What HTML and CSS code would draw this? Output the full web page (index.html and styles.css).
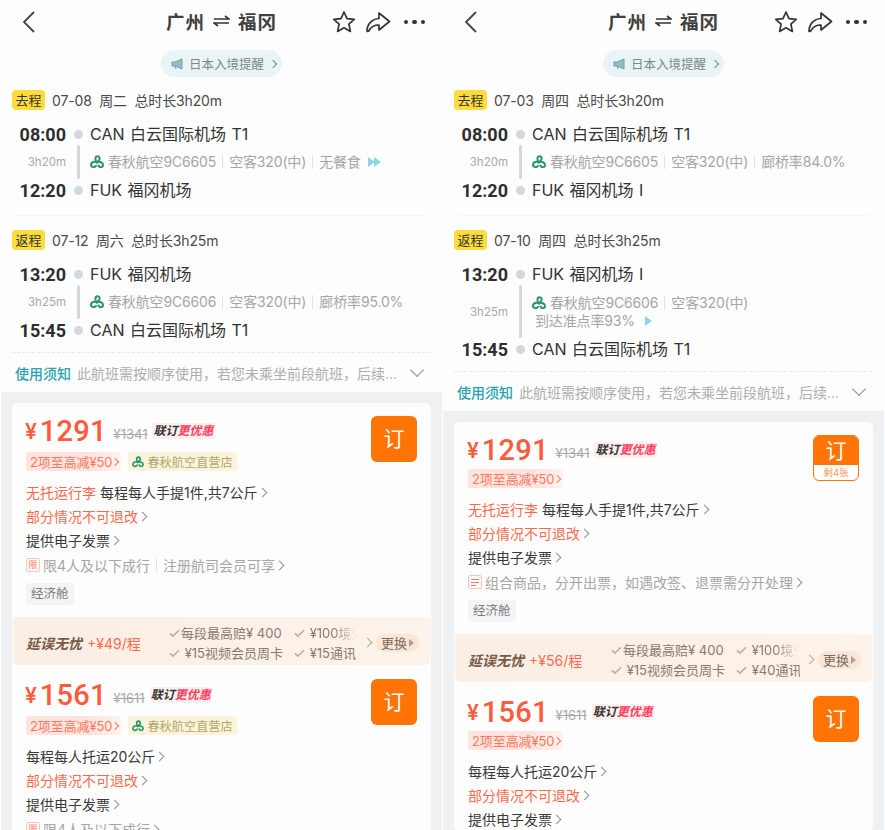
FILE: index.html
```html
<!DOCTYPE html>
<html lang="zh-CN">
<head>
    <meta charset="UTF-8">
    <meta name="viewport" content="width=device-width, initial-scale=1.0">
    <title>广州 福冈</title>
    <link rel="stylesheet" href="styles.css">
</head>
<body>
    <svg class="defs" width="0" height="0" aria-hidden="true">
        <symbol id="logo" viewBox="0 0 14 14">
            <g fill="none" stroke="currentColor" stroke-width="2" stroke-linecap="round">
                <path d="M7 7.5 C4.8 5.5 4.8 1.2 7.5 1.2 C10 1.2 10.5 4.5 8.2 5.8"/>
                <path d="M7 7.5 C5 6 1 7 1 9.8 C1 12.3 4.3 13 6 10.8"/>
                <path d="M7 7.2 C9.5 6.2 13 7.4 13 10 C13 12.5 9.6 13 8.4 10.5"/>
            </g>
        </symbol>
        <symbol id="check" viewBox="0 0 12 10">
            <path d="M1 5.5 L4.2 8.4 L11 2" fill="none" stroke="currentColor" stroke-width="1.8"/>
        </symbol>
    </svg>

    <main class="screens">
        <!-- 左边的行程 -->
        <section class="phone">
            <header class="nav">
                <svg class="back" width="14" height="24" viewBox="0 0 14 24"><path d="M12 2 L2 12 L12 22" fill="none" stroke="#444" stroke-width="1.8"/></svg>
                <h1 class="title">广州<svg width="17" height="12" viewBox="0 0 17 12"><path d="M1 4 H16 L12 1 M16 8 H1 L5 11" fill="none" stroke="#333" stroke-width="1.6"/></svg>福冈</h1>
                <div class="nav-icons">
                    <svg width="24" height="24" viewBox="0 0 24 24"><path d="M12 2 L15 8.6 L22.2 9.4 L16.9 14.2 L18.4 21.4 L12 17.8 L5.6 21.4 L7.1 14.2 L1.8 9.4 L9 8.6 Z" fill="none" stroke="#333" stroke-width="1.7" stroke-linejoin="round"/></svg>
                    <svg width="26" height="24" viewBox="0 0 26 24"><path d="M2 21 C2 14 7 9 14 8.5 V3 L24.5 11.5 L14 20 V15 C9 15 6 17 4 20.5 C3.4 21.6 2 21.8 2 21 Z" fill="none" stroke="#333" stroke-width="1.7" stroke-linejoin="round"/></svg>
                    <span class="dots"><i></i><i></i><i></i></span>
                </div>
            </header>
            <div class="notice-pill">
                <svg width="13" height="12" viewBox="0 0 13 12"><path d="M1 4 H4 L11 1 V11 L4 8 H1 Z M4 8 L5 11" fill="#8fc0c8" stroke="#7f9aa2" stroke-width="1"/></svg>
                日本入境提醒<span class="chev small"></span>
            </div>

            <div class="segment">
                <div class="seg-head"><span class="seg-tag">去程</span>07-08&nbsp; 周二&nbsp; 总时长3h20m</div>
                <div class="row"><b class="time">08:00</b><span class="dot"></span><span class="airport">CAN 白云国际机场 T1</span></div>
                <div class="row mid">
                    <span class="dur">3h20m</span><span class="bar"></span>
                    <div class="info"><svg class="logo"><use href="#logo"/></svg>春秋航空9C6605<i class="sep"></i>空客320(中)<i class="sep"></i>无餐食<span class="more"><i></i><i></i></span></div>
                </div>
                <div class="row"><b class="time">12:20</b><span class="dot"></span><span class="airport">FUK 福冈机场</span></div>
            </div>
            <div class="seg-line"></div>
            <div class="segment">
                <div class="seg-head"><span class="seg-tag">返程</span>07-12&nbsp; 周六&nbsp; 总时长3h25m</div>
                <div class="row"><b class="time">13:20</b><span class="dot"></span><span class="airport">FUK 福冈机场</span></div>
                <div class="row mid">
                    <span class="dur">3h25m</span><span class="bar"></span>
                    <div class="info"><svg class="logo"><use href="#logo"/></svg>春秋航空9C6606<i class="sep"></i>空客320(中)<i class="sep"></i>廊桥率95.0%</div>
                </div>
                <div class="row"><b class="time">15:45</b><span class="dot"></span><span class="airport">CAN 白云国际机场 T1</span></div>
            </div>
            <div class="rules"><b>使用须知</b><span>此航班需按顺序使用，若您未乘坐前段航班，后续…</span><span class="chev down"></span></div>

            <div class="list">
                <div class="card">
                    <div class="product">
                        <div class="product-main">
                            <div class="price-row"><span class="yen">¥</span><span class="price">1291</span><s class="old">¥1341</s><span class="promo">联订<em>更优惠</em></span></div>
                            <div class="chips"><span class="chip red">2项至高减¥50<span class="chev small"></span></span><span class="chip gold"><svg class="logo"><use href="#logo"/></svg>春秋航空直营店</span></div>
                            <div class="line"><span class="warn">无托运行李</span>&nbsp;每程每人手提1件,共7公斤<span class="chev"></span></div>
                            <div class="line warn">部分情况不可退改<span class="chev"></span></div>
                            <div class="line">提供电子发票<span class="chev"></span></div>
                            <div class="line muted"><span class="mark">限</span>限4人及以下成行<i class="sep"></i>注册航司会员可享<span class="chev"></span></div>
                            <span class="cabin">经济舱</span>
                        </div>
                        <div class="book">订</div>
                    </div>
                    <div class="addon">
                        <div class="addon-name"><b>延误无忧</b><span>+¥49/程</span></div>
                        <div class="perks">
                            <span><svg class="check"><use href="#check"/></svg>每段最高赔¥ 400</span><span><svg class="check"><use href="#check"/></svg>&nbsp;¥100境外</span>
                            <span><svg class="check"><use href="#check"/></svg>&nbsp;¥15视频会员周卡</span><span><svg class="check"><use href="#check"/></svg>&nbsp;¥15通讯</span>
                        </div>
                        <span class="chev"></span>
                        <span class="swap">更换<i></i></span>
                    </div>
                    <div class="product">
                        <div class="product-main">
                            <div class="price-row"><span class="yen">¥</span><span class="price">1561</span><s class="old">¥1611</s><span class="promo">联订<em>更优惠</em></span></div>
                            <div class="chips"><span class="chip red">2项至高减¥50<span class="chev small"></span></span><span class="chip gold"><svg class="logo"><use href="#logo"/></svg>春秋航空直营店</span></div>
                            <div class="line">每程每人托运20公斤<span class="chev"></span></div>
                            <div class="line warn">部分情况不可退改<span class="chev"></span></div>
                            <div class="line">提供电子发票<span class="chev"></span></div>
                            <div class="line muted"><span class="mark">限</span>限4人及以下成行<span class="chev"></span></div>
                        </div>
                        <div class="book">订</div>
                    </div>
                </div>
            </div>
        </section>

        <!-- 右边的行程 -->
        <section class="phone">
            <header class="nav">
                <svg class="back" width="14" height="24" viewBox="0 0 14 24"><path d="M12 2 L2 12 L12 22" fill="none" stroke="#444" stroke-width="1.8"/></svg>
                <h1 class="title">广州<svg width="17" height="12" viewBox="0 0 17 12"><path d="M1 4 H16 L12 1 M16 8 H1 L5 11" fill="none" stroke="#333" stroke-width="1.6"/></svg>福冈</h1>
                <div class="nav-icons">
                    <svg width="24" height="24" viewBox="0 0 24 24"><path d="M12 2 L15 8.6 L22.2 9.4 L16.9 14.2 L18.4 21.4 L12 17.8 L5.6 21.4 L7.1 14.2 L1.8 9.4 L9 8.6 Z" fill="none" stroke="#333" stroke-width="1.7" stroke-linejoin="round"/></svg>
                    <svg width="26" height="24" viewBox="0 0 26 24"><path d="M2 21 C2 14 7 9 14 8.5 V3 L24.5 11.5 L14 20 V15 C9 15 6 17 4 20.5 C3.4 21.6 2 21.8 2 21 Z" fill="none" stroke="#333" stroke-width="1.7" stroke-linejoin="round"/></svg>
                    <span class="dots"><i></i><i></i><i></i></span>
                </div>
            </header>
            <div class="notice-pill">
                <svg width="13" height="12" viewBox="0 0 13 12"><path d="M1 4 H4 L11 1 V11 L4 8 H1 Z M4 8 L5 11" fill="#8fc0c8" stroke="#7f9aa2" stroke-width="1"/></svg>
                日本入境提醒<span class="chev small"></span>
            </div>

            <div class="segment">
                <div class="seg-head"><span class="seg-tag">去程</span>07-03&nbsp; 周四&nbsp; 总时长3h20m</div>
                <div class="row"><b class="time">08:00</b><span class="dot"></span><span class="airport">CAN 白云国际机场 T1</span></div>
                <div class="row mid">
                    <span class="dur">3h20m</span><span class="bar"></span>
                    <div class="info"><svg class="logo"><use href="#logo"/></svg>春秋航空9C6605<i class="sep"></i>空客320(中)<i class="sep"></i>廊桥率84.0%</div>
                </div>
                <div class="row"><b class="time">12:20</b><span class="dot"></span><span class="airport">FUK 福冈机场 I</span></div>
            </div>
            <div class="seg-line"></div>
            <div class="segment">
                <div class="seg-head"><span class="seg-tag">返程</span>07-10&nbsp; 周四&nbsp; 总时长3h25m</div>
                <div class="row"><b class="time">13:20</b><span class="dot"></span><span class="airport">FUK 福冈机场 I</span></div>
                <div class="row mid tall">
                    <span class="dur">3h25m</span><span class="bar"></span>
                    <div class="info-stack">
                        <div class="info"><svg class="logo"><use href="#logo"/></svg>春秋航空9C6606<i class="sep"></i>空客320(中)</div>
                        <div class="info second">到达准点率93%<span class="more single"><i></i></span></div>
                    </div>
                </div>
                <div class="row"><b class="time">15:45</b><span class="dot"></span><span class="airport">CAN 白云国际机场 T1</span></div>
            </div>
            <div class="rules"><b>使用须知</b><span>此航班需按顺序使用，若您未乘坐前段航班，后续…</span><span class="chev down"></span></div>

            <div class="list">
                <div class="card">
                    <div class="product">
                        <div class="product-main">
                            <div class="price-row"><span class="yen">¥</span><span class="price">1291</span><s class="old">¥1341</s><span class="promo">联订<em>更优惠</em></span></div>
                            <div class="chips tight"><span class="chip red">2项至高减¥50<span class="chev small"></span></span></div>
                            <div class="line"><span class="warn">无托运行李</span>&nbsp;每程每人手提1件,共7公斤<span class="chev"></span></div>
                            <div class="line warn">部分情况不可退改<span class="chev"></span></div>
                            <div class="line">提供电子发票<span class="chev"></span></div>
                            <div class="line muted"><span class="mark list-mark"><i></i><i></i><i></i></span>组合商品，分开出票，如遇改签、退票需分开处理<span class="chev"></span></div>
                            <span class="cabin">经济舱</span>
                        </div>
                        <div class="book with-left"><span>订</span><small>剩4张</small></div>
                    </div>
                    <div class="addon">
                        <div class="addon-name"><b>延误无忧</b><span>+¥56/程</span></div>
                        <div class="perks">
                            <span><svg class="check"><use href="#check"/></svg>每段最高赔¥ 400</span><span><svg class="check"><use href="#check"/></svg>&nbsp;¥100境外</span>
                            <span><svg class="check"><use href="#check"/></svg>&nbsp;¥15视频会员周卡</span><span><svg class="check"><use href="#check"/></svg>&nbsp;¥40通讯</span>
                        </div>
                        <span class="chev"></span>
                        <span class="swap">更换<i></i></span>
                    </div>
                    <div class="product">
                        <div class="product-main">
                            <div class="price-row"><span class="yen">¥</span><span class="price">1561</span><s class="old">¥1611</s><span class="promo">联订<em>更优惠</em></span></div>
                            <div class="chips tight"><span class="chip red">2项至高减¥50<span class="chev small"></span></span></div>
                            <div class="line">每程每人托运20公斤<span class="chev"></span></div>
                            <div class="line warn">部分情况不可退改<span class="chev"></span></div>
                            <div class="line">提供电子发票<span class="chev"></span></div>
                        </div>
                        <div class="book">订</div>
                    </div>
                </div>
            </div>
        </section>
    </main>
</body>
</html>
```

FILE: styles.css
```css
* {
    box-sizing: border-box;
}
body {
    margin: 0;
    background: #fff;
    font-family: Inter, "Noto Sans CJK SC", sans-serif;
    color: #333;
}
.defs {
    position: absolute;
}
.screens {
    display: grid;
    grid-template-columns: 441px 441px;
    gap: 1px;
    padding-left: 1px;
    height: 830px;
    overflow: hidden;
}
.phone {
    background: #fdfdfd;
    height: 830px;
    overflow: hidden;
}

/* шапка */
.nav {
    display: grid;
    grid-template-columns: 1fr auto 1fr;
    align-items: center;
    height: 44px;
    padding: 0 17px;
}
.back {
    margin-left: 4px;
}
.title {
    display: flex;
    align-items: center;
    gap: 8px;
    margin: -2px 0 0;
    font-size: 18.5px;
    font-weight: 600;
    letter-spacing: 1px;
    color: #404040;
}
.nav-icons {
    display: flex;
    align-items: center;
    justify-content: flex-end;
    gap: 9px;
}
.dots {
    display: flex;
    gap: 4px;
    margin-left: 4px;
}
.dots i {
    width: 4.5px;
    height: 4.5px;
    border-radius: 50%;
    background: #333;
}
.notice-pill {
    display: flex;
    align-items: center;
    gap: 5px;
    width: 121px;
    height: 27px;
    margin: 6px auto 13px;
    padding-left: 10px;
    border-radius: 14px;
    background: #e9f4f6;
    font-size: 12.5px;
    color: #7a888c;
    white-space: nowrap;
}

/* сегменты */
.segment {
    padding-left: 11px;
}
.seg-head {
    display: flex;
    align-items: center;
    height: 20px;
    margin-bottom: 13px;
    font-size: 14px;
    letter-spacing: -0.15px;
    color: #4a4a4a;
}
.seg-tag {
    width: 33px;
    height: 20px;
    margin-right: 7px;
    border-radius: 4px;
    background: #ffdc3c;
    font-size: 13px;
    letter-spacing: 0;
    line-height: 20px;
    text-align: center;
    color: #333;
}
.seg-line {
    height: 1px;
    margin: 14px 14px 14px 15px;
    background: #f6f6f6;
}
.row {
    display: flex;
    align-items: center;
    height: 22px;
}
.time {
    width: 54px;
    font-family: Roboto, sans-serif;
    font-size: 18px;
    font-weight: 700;
    text-align: right;
    color: #2e2e2e;
}
.dot {
    width: 9px;
    height: 9px;
    margin: 0 7.5px;
    border-radius: 50%;
    background: #d6d7dc;
}
.airport {
    margin-top: -2px;
    font-size: 16px;
    word-spacing: 1px;
    color: #333;
}
.row.mid {
    height: 34px;
}
.row.mid.tall {
    height: 53px;
}
.dur {
    width: 54px;
    font-size: 11.5px;
    text-align: right;
    color: #a9a9a9;
}
.bar {
    align-self: stretch;
    width: 3px;
    margin: 0 10.5px;
    border-radius: 2px;
    background: #d6d7dc;
}
.info {
    display: flex;
    align-items: center;
    font-size: 14px;
    letter-spacing: -0.15px;
    line-height: 18px;
    color: #a6a6a6;
    white-space: nowrap;
}
.info.second {
    margin-left: 3px;
}
.logo {
    flex: none;
    width: 14px;
    height: 14px;
    margin-right: 4px;
    color: #2a9565;
}
.sep {
    display: inline-block;
    width: 1px;
    height: 14px;
    margin: 0 6px;
    background: #e3e3e3;
}
.more {
    display: inline-flex;
    margin-left: 7px;
}
.more.single {
    margin-left: 10px;
}
.more i {
    width: 0;
    height: 0;
    margin-right: -1px;
    border-left: 7px solid #8fd6dc;
    border-top: 5px solid transparent;
    border-bottom: 5px solid transparent;
}
.rules {
    display: flex;
    align-items: center;
    height: 40px;
    margin: 11px 12px 0 11px;
    padding: 0 6px 0 3px;
    border-top: 1px dashed #e8e8e8;
    font-size: 14px;
    color: #adadad;
    white-space: nowrap;
}
.rules b {
    margin-right: 6px;
    font-weight: 500;
    color: #2aa3ae;
}
.rules .chev {
    margin-left: auto;
}

/* карточки */
.list {
    height: 100%;
    padding: 11px 11px 0;
    background: #eff0f2;
}
.card {
    border-radius: 5px;
    background: #fdfdfd;
}
.product {
    display: flex;
    justify-content: space-between;
    align-items: flex-start;
    padding: 13px 14px 0;
}
.addon + .product {
    padding-top: 14px;
}
.addon + .product .price-row {
    margin-top: 1px;
}
.price-row {
    display: flex;
    align-items: center;
    height: 30px;
}
.yen {
    margin: 0 3px 0 -1px;
    font-size: 21px;
    font-weight: 600;
    color: #ff5a3c;
}
.price {
    font-family: Roboto, sans-serif;
    font-size: 29px;
    font-weight: 500;
    letter-spacing: 0.2px;
    color: #ff5a3c;
}
.old {
    margin: 6px 5px 0 7px;
    font-size: 13px;
    color: #a8a8a8;
}
.promo {
    padding: 0 1px;
    border-radius: 2px;
    background: #fff0f0;
    font-size: 12px;
    font-style: italic;
    font-weight: 700;
    line-height: 16px;
    color: #333;
}
.promo em {
    color: #ff4060;
}
.chips {
    display: flex;
    gap: 7px;
    margin: 6px 0 9px;
}
.chips.tight {
    margin: 4px 0 9px;
}
.chip {
    display: flex;
    align-items: center;
    height: 19px;
    padding: 0 4px;
    border-radius: 2px;
    font-size: 13px;
    white-space: nowrap;
}
.chip.red {
    padding-right: 3px;
    background: linear-gradient(90deg, #ffe3df 70%, #fff3f0);
    letter-spacing: -0.1px;
    color: #ff7a5c;
}
.chip.red .chev {
    margin-left: 0;
}
.chip.gold {
    background: #fbf4dc;
    font-size: 12.2px;
    color: #b8a468;
}
.chip .logo {
    width: 12px;
    height: 12px;
    margin-right: 3px;
}
.line {
    display: flex;
    align-items: center;
    height: 24px;
    font-size: 14px;
    color: #3a3a3a;
    white-space: nowrap;
}
.warn {
    color: #ff6a4c;
}
.muted {
    height: 26px;
    color: #a6a6a6;
}
.mark {
    flex: none;
    width: 14px;
    height: 14px;
    margin-right: 3px;
    border: 1px solid #ffc4b8;
    border-radius: 2px;
    font-size: 9px;
    line-height: 12px;
    text-align: center;
    color: #ff7a5c;
}
.list-mark {
    display: flex;
    flex-direction: column;
    justify-content: center;
    gap: 2px;
    padding-left: 2px;
}
.list-mark i {
    width: 8px;
    height: 1px;
    background: #ff7a5c;
}
.list-mark i:last-child {
    width: 5px;
}
.cabin {
    display: inline-block;
    height: 22px;
    margin-top: 5px;
    padding: 0 5px;
    border-radius: 3px;
    background: #f3f4f6;
    font-size: 12.5px;
    line-height: 22px;
    color: #7a7a7a;
}
.book {
    flex: none;
    width: 46px;
    height: 46px;
    border-radius: 6px;
    background: #ff7405;
    font-size: 21px;
    line-height: 46px;
    text-align: center;
    color: #fff;
}
.book.with-left {
    display: flex;
    flex-direction: column;
    border: 1px solid #ff7405;
    background: #fff;
    line-height: 1;
    overflow: hidden;
}
.book.with-left span {
    height: 29px;
    background: #ff7405;
    line-height: 29px;
}
.book.with-left small {
    font-size: 9.5px;
    line-height: 15px;
    color: #ff9550;
}

/* доп. услуга */
.addon {
    display: flex;
    align-items: center;
    height: 48px;
    margin: 12px 1px 0;
    padding: 3px 10px 0 13px;
    border-radius: 0 0 5px 5px;
    background: linear-gradient(90deg, #fbeee4, #fdf3ea);
    font-size: 13px;
    color: #8a7a70;
    white-space: nowrap;
}
.addon-name {
    display: flex;
    align-items: center;
    gap: 5px;
    width: 143px;
    font-size: 14px;
    color: #ff6a4c;
}
.addon-name b {
    font-style: italic;
    color: #7a5a48;
}
.perks {
    display: grid;
    grid-template-columns: 125px 64px;
    row-gap: 2px;
    overflow: hidden;
}
.perks span {
    display: flex;
    align-items: center;
    height: 18px;
    overflow: hidden;
}
.perks span:nth-child(2) {
    -webkit-mask-image: linear-gradient(90deg, #000 40px, transparent 62px);
    mask-image: linear-gradient(90deg, #000 40px, transparent 62px);
}
.check {
    flex: none;
    width: 11px;
    height: 10px;
    margin-right: 1px;
    color: #c4ad9e;
}
.addon .chev {
    margin-left: 6px;
    color: #b9a99e;
}
.swap {
    display: flex;
    align-items: center;
    gap: 2px;
    height: 18px;
    margin-left: 5px;
    padding: 0 5px;
    border-radius: 9px;
    background: #f9e6d8;
    color: #7e6a5c;
}
.swap i {
    width: 0;
    height: 0;
    border-left: 5px solid #b59d8d;
    border-top: 4px solid transparent;
    border-bottom: 4px solid transparent;
}

/* шеврон на CSS */
.chev {
    display: inline-block;
    flex: none;
    width: 7px;
    height: 7px;
    margin-left: 1px;
    border-top: 1px solid currentColor;
    border-right: 1px solid currentColor;
    color: #8f8f8f;
    transform: rotate(45deg);
}
.chev.small {
    width: 6px;
    height: 6px;
    color: inherit;
}
.chev.down {
    width: 10px;
    height: 10px;
    margin-top: -5px;
    margin-right: 2px;
    transform: rotate(135deg);
}
```
